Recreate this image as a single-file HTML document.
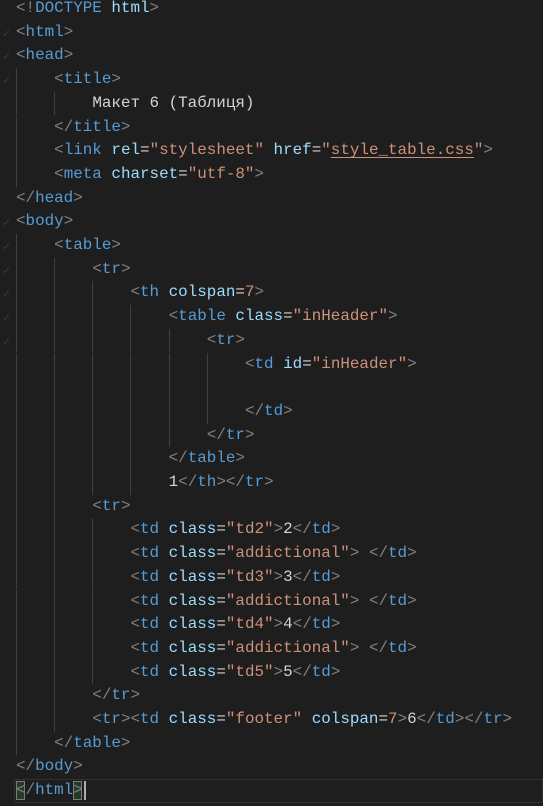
<!DOCTYPE html>
<html><head><meta charset="utf-8"><style>
html,body{margin:0;padding:0;background:#1e1e1e;width:543px;height:806px;overflow:hidden}
#c{position:absolute;left:0;top:-3px;width:543px}
.l{position:absolute;left:16px;height:23.7px;line-height:23.7px;white-space:pre;font-family:"Liberation Mono","Noto Sans CJK SC",monospace;font-size:15.9px;color:#d4d4d4}
.g{color:#808080}.t{color:#569cd6}.a{color:#9cdcfe}.s{color:#ce9178}
.u{text-decoration:underline;text-decoration-color:#ce9178;text-underline-offset:3px}
.gd{position:absolute;width:1px;background:#404040}
.ck{position:absolute;left:2px;color:#3a3a3a;font-size:11px;font-family:"DejaVu Sans",sans-serif}
</style></head><body>
<div id="c"></div>
<script>
var L=[
[0,'<span class="g">&lt;!</span><span class="t">DOCTYPE</span> <span class="a">html</span><span class="g">&gt;</span>'],
[0,'<span class="g">&lt;</span><span class="t">html</span><span class="g">&gt;</span>'],
[0,'<span class="g">&lt;</span><span class="t">head</span><span class="g">&gt;</span>'],
[1,'<span class="g">&lt;</span><span class="t">title</span><span class="g">&gt;</span>'],
[2,'Макет 6 (Таблиця)'],
[1,'<span class="g">&lt;/</span><span class="t">title</span><span class="g">&gt;</span>'],
[1,'<span class="g">&lt;</span><span class="t">link</span> <span class="a">rel</span>=<span class="s">"stylesheet"</span> <span class="a">href</span>=<span class="s">"<span class="u">style_table.css</span>"</span><span class="g">&gt;</span>'],
[1,'<span class="g">&lt;</span><span class="t">meta</span> <span class="a">charset</span>=<span class="s">"utf-8"</span><span class="g">&gt;</span>'],
[0,'<span class="g">&lt;/</span><span class="t">head</span><span class="g">&gt;</span>'],
[0,'<span class="g">&lt;</span><span class="t">body</span><span class="g">&gt;</span>'],
[1,'<span class="g">&lt;</span><span class="t">table</span><span class="g">&gt;</span>'],
[2,'<span class="g">&lt;</span><span class="t">tr</span><span class="g">&gt;</span>'],
[3,'<span class="g">&lt;</span><span class="t">th</span> <span class="a">colspan</span>=<span class="s">7</span><span class="g">&gt;</span>'],
[4,'<span class="g">&lt;</span><span class="t">table</span> <span class="a">class</span>=<span class="s">"inHeader"</span><span class="g">&gt;</span>'],
[5,'<span class="g">&lt;</span><span class="t">tr</span><span class="g">&gt;</span>'],
[6,'<span class="g">&lt;</span><span class="t">td</span> <span class="a">id</span>=<span class="s">"inHeader"</span><span class="g">&gt;</span>'],
[6,''],
[6,'<span class="g">&lt;/</span><span class="t">td</span><span class="g">&gt;</span>'],
[5,'<span class="g">&lt;/</span><span class="t">tr</span><span class="g">&gt;</span>'],
[4,'<span class="g">&lt;/</span><span class="t">table</span><span class="g">&gt;</span>'],
[4,'1<span class="g">&lt;/</span><span class="t">th</span><span class="g">&gt;&lt;/</span><span class="t">tr</span><span class="g">&gt;</span>'],
[2,'<span class="g">&lt;</span><span class="t">tr</span><span class="g">&gt;</span>']
];
function td(c,v){return '<span class="g">&lt;</span><span class="t">td</span> <span class="a">class</span>=<span class="s">"'+c+'"</span><span class="g">&gt;</span>'+v+'<span class="g">&lt;/</span><span class="t">td</span><span class="g">&gt;</span>';}
L.push([3,td('td2','2')],[3,td('addictional',' ')],[3,td('td3','3')],[3,td('addictional',' ')],[3,td('td4','4')],[3,td('addictional',' ')],[3,td('td5','5')]);
L.push([2,'<span class="g">&lt;/</span><span class="t">tr</span><span class="g">&gt;</span>']);
L.push([2,'<span class="g">&lt;</span><span class="t">tr</span><span class="g">&gt;&lt;</span><span class="t">td</span> <span class="a">class</span>=<span class="s">"footer"</span> <span class="a">colspan</span>=<span class="s">7</span><span class="g">&gt;</span>6<span class="g">&lt;/</span><span class="t">td</span><span class="g">&gt;&lt;/</span><span class="t">tr</span><span class="g">&gt;</span>']);
L.push([1,'<span class="g">&lt;/</span><span class="t">table</span><span class="g">&gt;</span>']);
L.push([0,'<span class="g">&lt;/</span><span class="t">body</span><span class="g">&gt;</span>']);
L.push([0,'<span class="g">&lt;/</span><span class="t">html</span><span class="g">&gt;</span>']);
var c=document.getElementById('c'),h='',LH=23.7,CW=9.54;
h+='<div style="position:absolute;left:14px;right:0;top:'+(33*LH)+'px;height:'+(LH-2)+'px;border:1px solid #303030"></div>';
h+='<div style="position:absolute;left:16px;top:'+(33*LH+2)+'px;width:9px;height:19px;border:1px solid #7a7a7a;background:#263a2a;box-sizing:border-box"></div>';
h+='<div style="position:absolute;left:'+(16+6*CW)+'px;top:'+(33*LH+2)+'px;width:9px;height:19px;border:1px solid #7a7a7a;background:#263a2a;box-sizing:border-box"></div>';
h+='<div style="position:absolute;left:'+(16+7*CW+1)+'px;top:'+(33*LH+2)+'px;width:2px;height:19px;background:#aeafad"></div>';
for(var i=0;i<L.length;i++){
 var n=L[i][0];
 for(var k=0;k<n;k++){h+='<div class="gd" style="left:'+(16+k*4*CW)+'px;top:'+(i*LH)+'px;height:'+LH+'px"></div>';}
 h+='<div class="l" style="top:'+(i*LH)+'px;left:'+(16+n*4*CW)+'px">'+L[i][1]+'</div>';
}
[1,2,3,9,10,11,12,13,14].forEach(function(i){h+='<div class="ck" style="top:'+(i*LH+6)+'px">✓</div>';});
c.innerHTML=h;
</script>
</body></html>
